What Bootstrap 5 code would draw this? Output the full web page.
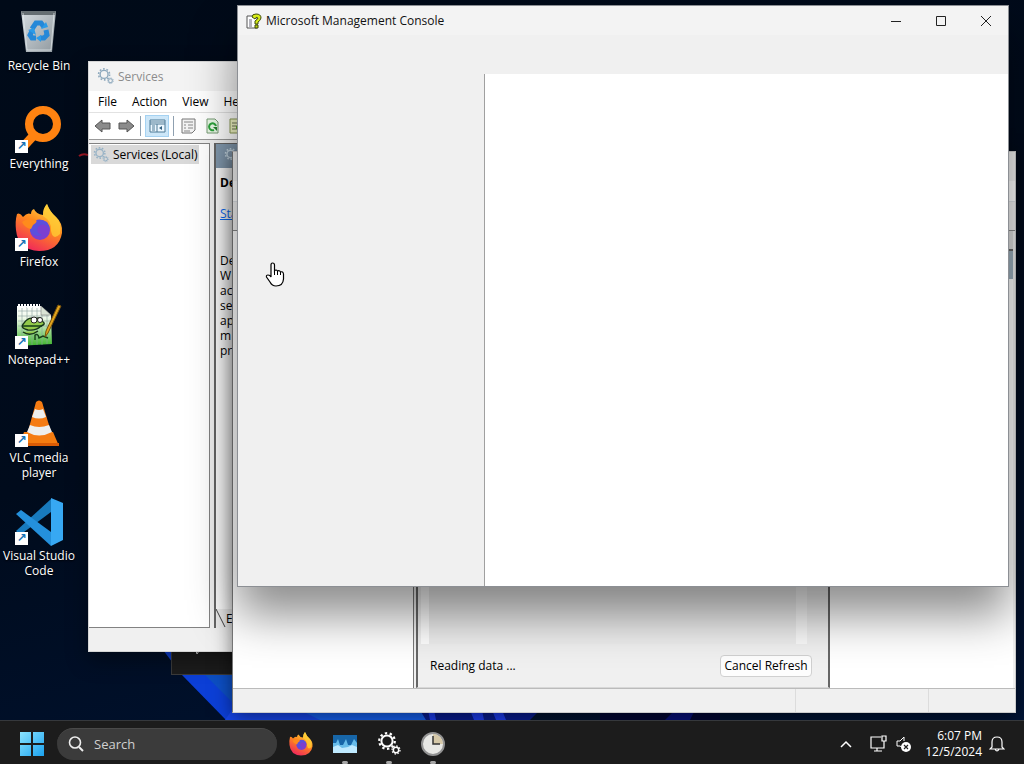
<!DOCTYPE html>
<html lang="en">
<head>
<meta charset="utf-8">
<meta name="viewport" content="width=device-width, initial-scale=1">
<title>Desktop</title>
<link href="https://cdn.jsdelivr.net/npm/bootstrap@5.3.0/dist/css/bootstrap.min.css" rel="stylesheet">
<style>
body{font-family:"Open Sans","Noto Sans",sans-serif;font-size:12px;line-height:15px;color:#000;background:#000c1c}
.workspace{background:linear-gradient(165deg,#000a18 0%,#000b1c 50%,#001436 100%)}
.wallpaper{left:0;right:0;bottom:0;height:200px;width:100%}
.shortcuts{width:78px;padding-top:8px}
.shortcut{height:98px;color:#fff;text-decoration:none;text-align:center;text-shadow:0 1px 2px #000;position:relative}
.shortcut svg{display:block;width:48px;height:48px;margin:0 auto 2px}
.shortcut.linked::after{content:"↗";position:absolute;left:15px;top:34px;width:13px;height:13px;background:#fff;color:#1673b5;font:bold 12px/13px "DejaVu Sans",sans-serif;text-shadow:none}
.red-mark{left:78px;top:150px}
.win{position:absolute;background:#f0f0f0;overflow:hidden}
.win-title{height:29px;background:#f3f3f3;color:#111}
.win-services{left:88px;top:61px;bottom:68px;width:420px;border:1px solid #d5d5d5;box-shadow:0 8px 20px rgba(0,0,0,.4)}
.win-services .win-title{color:#8c8c8c}
.win-tasks{left:232px;right:8px;top:151px;bottom:7px;border:1px solid #ccc;border-left-color:#777;box-shadow:0 4px 18px rgba(0,0,0,.5)}
.win-console{left:237px;right:15px;top:5px;bottom:133px;border:1px solid #8c8f94;box-shadow:0 28px 44px rgba(0,0,0,.45)}
.menubar{height:21px;background:#fff;padding-left:9px;gap:15px}
.menubar a{color:#000;text-decoration:none}
.toolstrip{height:28px;background:#fff;border-top:1px solid #e2e2e2;border-bottom:1px solid #999;padding-left:3px;gap:4px}
.toolstrip button{border:0;background:none;padding:0;display:flex;align-items:center;justify-content:center;height:24px;width:20px}
.toolstrip .on{background:#cce6f8;border:1px solid #a5d2f2;width:24px;height:22px}
.vsep{width:1px;height:20px;background:#8fa0b0}
.tree{width:121px;background:#fff;border:1px solid #828282;border-width:1px 1px 1px 0}
.tree-item{background:#d9d9d9;height:19px;margin:1px 0 0 2px;width:108px;padding-left:2px;gap:4px}
.details{margin-left:4px;border-left:2px solid #666;background:#fff}
.details-head{height:25px;background:#849bb0;border-top:1px solid #666}
.details-body{padding:7px 0 0 4px}
.tabs-foot{height:19px;background:#eee}
.statusline{height:23px}
.toast-strip{left:171px;bottom:45px;width:100px;height:30px;background:#1c1c1c;border:1px solid #3b3b3b}
.tasks-tools{height:29px;border-bottom:1px solid #888}
.pane-left{width:181px;background:#fff;border-right:1px solid #777}
.pane-mid{border:2px solid #666;border-top:0;border-bottom:1px solid #d8d8d8;margin-left:2px}
.pane-right{width:183px;background:#fff;margin-right:2px}
.pane-caption{height:20px;background:#ddd;border-bottom:2px solid #666}
.pane-heading{height:28px;background:#9cafbd}
.scrollbox{margin:0 21px 0 3px;border-left:8px solid #fff;border-right:11px solid #fafafa;background:#eee}
.reading{height:43px;padding:0 16px 0 12px}
.btn-cancel{height:22px;width:92px;border:1px solid #d0d0d0;border-radius:4px;background:#fdfdfd;padding:0;font-size:12px;color:#000}
.parts{height:24px;border-top:1px solid #bbb}
.parts div{border-left:1px solid #dcdcdc}
.part-wide{width:133px}
.part-end{width:87px}
.cap{width:45px;height:29px;border:0;background:none;padding:0;display:flex;align-items:center;justify-content:center}
.console-tree{width:246px}
.console-view{background:#fff;border-left:1px solid #a0a0a0;margin-top:39px}
.pointer{left:265px;top:262px;z-index:5}
.taskbar{height:44px;background:#1c1c1c;border-top:1px solid #35383c;color:#fff;padding:2px 8px 0 10px}
.taskbar button{border:0;background:none;padding:0;width:44px;height:41px;display:flex;align-items:center;justify-content:center;position:relative}
.taskbar .running::after{content:"";position:absolute;bottom:0;width:6px;height:3px;border-radius:2px;background:#a5a5a5}
.searchbox{width:220px;height:32px;border-radius:16px;background:#3b3b3b;border-top:1px solid #4a4a4a;padding:0 11px;gap:10px;margin:0 2px 0 3px}
.searchbox input{background:none;border:0;outline:0;color:#fff;font-size:13px;padding:0;width:150px}
.searchbox input::placeholder{color:#d0d0d0;opacity:1}
.taskbar .tray{width:25px}
.taskbar .bell{width:30px}
.clock{width:66px;text-align:right;line-height:16px}
</style>
</head>
<body>
<svg width="0" height="0" class="position-absolute" aria-hidden="true">
<defs>
<linearGradient id="fxg" x1=".8" y1="0" x2=".3" y2="1"><stop offset="0" stop-color="#ffe14a"/><stop offset=".45" stop-color="#ff8a1e"/><stop offset="1" stop-color="#f0255c"/></linearGradient>
<linearGradient id="wing" x1="0" y1="0" x2="1" y2="1"><stop offset="0" stop-color="#8be4ff"/><stop offset="1" stop-color="#1ba1ee"/></linearGradient>
<linearGradient id="npg" x1="0" y1="0" x2="0" y2="1"><stop offset="0" stop-color="#fff"/><stop offset=".3" stop-color="#eef8e8"/><stop offset="1" stop-color="#3cb52a"/></linearGradient>
<linearGradient id="bing" x1="0" y1="0" x2="1" y2="1"><stop offset="0" stop-color="#d5dce1"/><stop offset="1" stop-color="#8f989e"/></linearGradient>
<symbol id="firefox" viewBox="0 0 48 48">
<path d="M2 10Q5 8 8 13Q12 8 16 10Q16 6 19 5Q21 10 28 11Q28 4 32 0Q35 8 41 13Q48 19 47 29Q44 47 24 47Q3 46 1 26Q0 17 2 10Z" fill="url(#fxg)"/>
<path d="M32 0Q35 8 41 13Q47 19 45 30Q38 37 36 27Q37 17 28 12Q28 4 32 0Z" fill="#ffcf35" opacity=".75"/>
<circle cx="25" cy="26" r="10" fill="#7b3fd0"/><path d="M16 20Q23 12 32 18Q35 22 35 26Q29 17 23 23Q20 28 27 31Q19 34 15 27Z" fill="#5b50dc"/>
<path d="M7 18Q13 13 21 16Q23 18 18 21L16 25Q10 24 7 18Z" fill="#ff8b1c"/></symbol>
<symbol id="gears" viewBox="0 0 24 24" fill="none" stroke="currentColor">
<circle cx="10" cy="9" r="5.6" stroke-width="2"/><circle cx="10" cy="9" r="7.8" stroke-width="2.2" stroke-dasharray="2.4 2.5"/>
<circle cx="19" cy="18" r="2.7" stroke-width="1.5"/><circle cx="19" cy="18" r="4" stroke-width="1.3" stroke-dasharray="1.5 1.6"/></symbol>
</defs>
</svg>

<div class="vh-100 d-flex flex-column overflow-hidden">
<main class="workspace flex-grow-1 position-relative overflow-hidden">
<svg class="wallpaper position-absolute" viewBox="0 0 1024 200" preserveAspectRatio="none" aria-hidden="true">
<path d="M160 126L182 155L226 200H500L430 120Z" fill="#0c3fd6"/><path d="M205 155L236 186V155Z" fill="#0d4fc4"/>
<path d="M232 190H420L430 200H225Z" fill="#1746ea"/><path d="M300 190H420L426 200H320Z" fill="#1560ef"/><path d="M420 190H540L530 200H426Z" fill="#081c90"/><path d="M428 190H434L436 200H430ZM470 190H482L484 200H474ZM492 190H502L506 200H496Z" fill="#1d3df0"/>
<path d="M600 190H720V200H600Z" fill="#020634"/><path d="M675 190H695L690 200H665Z" fill="#07107a"/></svg>

<nav class="shortcuts d-flex flex-column" aria-label="Desktop shortcuts">
<a class="shortcut" href="#"><svg viewBox="0 0 48 48"><path d="M6 3L41 3L37 44H11Z" fill="url(#bing)"/><path d="M6 3H41L40 7H7Z" fill="#656e73"/><path d="M8 5L12 42H36L39 5" fill="none" stroke="#e3e9ec" opacity=".7"/><g fill="none" stroke="#2588d8" stroke-width="5"><path d="M17 21L21 15H26L29 19"/><path d="M31 22L32 27L29 30H25"/><path d="M21 30H17L15 27L17 23"/></g><path d="M26 21L33 19L31 14ZM26 27V34L21 30ZM13 22L19 20L21 27Z" fill="#2b9be8"/></svg>Recycle Bin</a>
<a class="shortcut linked" href="#"><svg viewBox="0 0 48 48"><circle cx="28" cy="18" r="14" fill="none" stroke="#ff8311" stroke-width="8"/><path d="M20 28L8 41" stroke="#ff8311" stroke-width="9"/></svg>Everything</a>
<a class="shortcut linked" href="#"><svg><use href="#firefox"/></svg>Firefox</a>
<a class="shortcut linked" href="#"><svg viewBox="0 0 48 48"><path d="M2 4H26L36 13L37 42L2 44Z" fill="url(#npg)"/><path d="M3 9H29M3 14H34M3 19H35M3 24H35M7 5V43M12 5V43M17 5V43M22 5V43M27 8V43M32 11V42" stroke="#8aa3a0" stroke-width=".6"/><path d="M3 4H25" stroke="#fff" stroke-width="4" stroke-dasharray="2 1"/><path d="M26 4V13H36Z" fill="#d9e3d5" stroke="#666" stroke-width=".5"/><path d="M9 21Q14 14 20 17Q26 14 27 19Q32 22 26 24Q21 29 13 28Q4 26 9 21ZM8 30Q15 35 23 29" fill="#92c94a" stroke="#17351a" stroke-width="1.4"/><circle cx="19" cy="18" r="3" fill="#fff" stroke="#222"/><circle cx="25" cy="18" r="2.5" fill="#fff" stroke="#222"/><path d="M8 24H27M20 38V33Q23 31 24 36L28 34L33 36" fill="none" stroke="#163f18" stroke-width="1.4"/><path d="M46 4L33 31L30 35L31 29L43 3Z" fill="#dfa31d" stroke="#76500c"/></svg>Notepad++</a>
<a class="shortcut linked" href="#"><svg viewBox="0 0 48 48"><path d="M9 32H38L44 46H4Z" fill="#f47c10"/><path d="M4 43H44V46H4Z" fill="#d95b05"/><path d="M21 2Q24 -1 27 2L37 35Q24 42 12 35Z" fill="#f57b12"/><path d="M20 9Q24 11 28 9L31 17Q24 20 17 17ZM15 25Q24 29 34 25L37 32Q24 39 12 32Z" fill="#eeeeec"/></svg>VLC media<br>player</a>
<a class="shortcut linked" href="#"><svg viewBox="0 0 48 48"><path d="M1 33L5 37L36 14V1Z" fill="#187abd"/><path d="M1 16L6 12L36 34V48Z" fill="#2490dc"/><path d="M36 0L48 5V42L36 48Z" fill="#37a8f3"/></svg>Visual Studio<br>Code</a>
</nav>
<svg class="red-mark position-absolute" width="10" height="10" aria-hidden="true"><path d="M1 6Q5 3 10 5" fill="none" stroke="#a31826" stroke-width="2"/></svg>
<div class="toast-strip position-absolute"><svg class="d-block ms-3" width="18" height="10" viewBox="0 0 18 10"><path d="M1 3H4L5 5L8 5L9 8L11 5L14 5L15 3H17" fill="none" stroke="#ddd"/></svg></div>

<section class="win win-services d-flex flex-column" aria-label="Services">
<header class="win-title d-flex align-items-center px-2"><svg class="me-1" width="17" height="17" style="color:#8ea9bd"><use href="#gears"/></svg><span>Services</span></header>
<nav class="menubar d-flex align-items-center"><a href="#">File</a><a href="#">Action</a><a href="#">View</a><a href="#">Help</a></nav>
<div class="toolstrip d-flex align-items-center">
<button type="button" aria-label="Back"><svg width="17" height="14"><path d="M1 7L8 1V4H16V10H8V13Z" fill="#8b8b8b" stroke="#555"/></svg></button>
<button type="button" aria-label="Forward"><svg width="17" height="14"><path d="M16 7L9 1V4H1V10H9V13Z" fill="#8b8b8b" stroke="#555"/></svg></button>
<span class="vsep"></span>
<button type="button" class="on" aria-label="Show console tree"><svg width="17" height="14"><path d="M1 1H16V13H1Z" fill="#eef8ff" stroke="#4c7894"/><path d="M1 3H16M1 5H16M8 5V13M3 7H6M3 9H6M3 11H6" stroke="#4c7894"/><path d="M13 7V11L10 9Z" fill="#315f80"/></svg></button>
<span class="vsep"></span>
<button type="button" aria-label="Properties"><svg width="15" height="16"><path d="M1 1H14V12L11 15H1Z" fill="#f3f3f3" stroke="#777"/><path d="M3 4H12M3 7H5M7 7H12M3 10H5M7 10H12M3 13H9" stroke="#888"/></svg></button>
<button type="button" aria-label="Refresh"><svg width="15" height="16"><path d="M2 1H10L13 4V15H2Z" fill="#e9f8e6" stroke="#769b74"/><path d="M11 8A3.5 3.5 0 1 0 9 12" fill="none" stroke="#2ca23c" stroke-width="2"/><path d="M8 9H12V13Z" fill="#21822e"/></svg></button>
<button type="button" aria-label="Export list"><svg width="15" height="16"><path d="M1 1H11L14 4V15H1Z" fill="#f1f6c4" stroke="#8c9b56"/><path d="M3 5H10M3 8H8M3 11H8" stroke="#6f7654"/><path d="M7 8H10V5L15 10L10 14V11H7Z" fill="#64a82c"/></svg></button>
</div>
<div class="d-flex flex-grow-1" style="padding-top:3px">
<div class="tree"><div class="tree-item d-flex align-items-center"><svg width="16" height="16" style="color:#98b3c6"><use href="#gears"/></svg><span class="text-nowrap">Services (Local)</span></div></div>
<div class="details flex-grow-1 d-flex flex-column"><div class="details-head"><svg class="ms-2 mt-1" width="16" height="16" style="color:#c9dbe6"><use href="#gears"/></svg></div>
<div class="details-body flex-grow-1"><b class="d-block">De</b><a class="d-block mt-3" href="#">Sta</a><p class="mt-4 pt-2 mb-0">De<br>W<br>ac<br>se<br>ap<br>m<br>pr</p></div>
<div class="tabs-foot d-flex align-items-center"><svg width="10" height="19"><path d="M0 0L9 18" stroke="#444"/></svg>E</div></div>
</div>
<div class="statusline"></div>
</section>

<section class="win win-tasks d-flex flex-column" aria-label="Task Scheduler">
<div class="win-title"></div><div class="menubar border-bottom"></div><div class="tasks-tools"></div>
<div class="d-flex flex-grow-1">
<div class="pane-left"></div>
<div class="pane-mid flex-grow-1 d-flex flex-column"><div class="scrollbox flex-grow-1"></div>
<div class="reading d-flex align-items-center justify-content-between"><span>Reading data ...</span><button type="button" class="btn-cancel">Cancel Refresh</button></div></div>
<div class="pane-right"><div class="pane-caption"></div><div class="pane-heading"></div></div>
</div>
<div class="parts d-flex"><div class="flex-grow-1 border-0"></div><div class="part-wide"></div><div class="part-end"></div></div>
</section>

<section class="win win-console d-flex flex-column" aria-label="Microsoft Management Console">
<header class="win-title d-flex align-items-center ps-2">
<svg class="me-1" width="16" height="16"><path d="M1 3H9L11 5V15H1Z" fill="#fff" stroke="#555"/><path d="M3 7H6M3 9H6M3 11H6M3 13H6" stroke="#667"/><path d="M6 4Q6 1 10 1Q15 1 15 5Q14 8 12 9V11H9V8Q12 6 12 5Q10 3 9 6Z" fill="#d8ed16" stroke="#3d4b0b"/><path d="M9 12H12V15H9Z" fill="#c2d40d" stroke="#3d4b0b"/></svg>
<span>Microsoft Management Console</span>
<div class="ms-auto d-flex"><button type="button" class="cap" aria-label="Minimize"><svg width="12" height="12"><path d="M1 6.500H11" stroke="#222"/></svg></button><button type="button" class="cap" aria-label="Maximize"><svg width="12" height="12"><path d="M1.500 1.500H10.500V10.500H1.500Z" fill="none" stroke="#222"/></svg></button><button type="button" class="cap" aria-label="Close"><svg width="12" height="12"><path d="M1 1L11 11M11 1L1 11" stroke="#222"/></svg></button></div>
</header>
<div class="flex-grow-1 d-flex"><div class="console-tree"></div><div class="console-view flex-grow-1"></div></div>
</section>
<svg class="pointer position-absolute" width="20" height="25" viewBox="0 0 20 25" aria-hidden="true"><path d="M6 15V3Q6 1 7.500 1Q9.500 1 9.500 3V9Q11 7 12.500 9Q14.500 8 15.500 10Q18 9 18.500 12V17Q18 24 11 24Q7 24 5 20L1.500 15Q1 13 3 13Q5 13 6 15Z" fill="#fff" stroke="#000" stroke-width="1.200"/><path d="M9.500 8V13M12.500 9V13M15.500 10V13" stroke="#000"/></svg>
</main>

<footer class="taskbar d-flex align-items-center flex-shrink-0">
<button type="button" aria-label="Start"><svg width="24" height="24"><path d="M0 0H11V11H0ZM13 0H24V11H13ZM0 13H11V24H0ZM13 13H24V24H13Z" fill="url(#wing)"/></svg></button>
<div class="searchbox d-flex align-items-center"><svg width="16" height="16" viewBox="0 0 16 16"><circle cx="7" cy="6.500" r="5.500" fill="none" stroke="#eee" stroke-width="1.600"/><path d="M11 11L15 15" stroke="#eee" stroke-width="2"/></svg><input type="text" placeholder="Search" aria-label="Search"></div>
<button type="button" aria-label="Firefox"><svg width="24" height="24"><use href="#firefox"/></svg></button>
<button type="button" class="running" aria-label="Server Manager"><svg width="24" height="20"><path d="M0 1H24V19H0Z" fill="#1766a8"/><path d="M0 9L3 9L5 5L7 11L10 11L13 5L15 11L18 11L21 5L24 9V19H0Z" fill="#67bce9"/><path d="M0 13L5 11L9 14L15 13L19 11L24 13V19H0Z" fill="#bfeaff"/></svg></button>
<button type="button" class="running text-white" aria-label="Services"><svg width="24" height="24"><use href="#gears"/></svg></button>
<button type="button" class="running" aria-label="Task Scheduler"><svg width="24" height="24"><circle cx="12" cy="12" r="11" fill="#e8e8e5" stroke="#929292" stroke-width="2"/><path d="M12 2A10 10 0 0 1 22 12H12Z" fill="#d5c8a8"/><path d="M12 4V12H19" fill="none" stroke="#333" stroke-width="1.500"/></svg></button>
<button type="button" class="ms-auto tray me-1" aria-label="Hidden icons"><svg width="12" height="8"><path d="M1 7L6 2L11 7" fill="none" stroke="#fff" stroke-width="1.500"/></svg></button>
<button type="button" class="tray ms-1" aria-label="Network"><svg width="18" height="18" fill="none" stroke="#fff"><path d="M11 2H1V13H14V9M4 16H12M7 13V16M12 1H16V6H12ZM14 6V10" stroke-width="1.200"/></svg></button>
<button type="button" class="tray" aria-label="Volume"><svg width="16" height="16"><path d="M7 12L4 10H1V5H4L8 1V5" fill="none" stroke="#fff"/><circle cx="10" cy="11" r="5" fill="#fff"/><path d="M8 9L12 13M12 9L8 13" stroke="#222" stroke-width="1.200"/></svg></button>
<div class="clock">6:07 PM<br>12/5/2024</div>
<button type="button" class="bell me-1" aria-label="Notifications"><svg width="16" height="18" fill="none" stroke="#fff"><path d="M3 12V7Q3 2 8 2Q13 2 13 7V12L15 14H1ZM6 14Q8 18 10 14" stroke-width="1.200"/></svg></button>
</footer>
</div>
</body>
</html>
